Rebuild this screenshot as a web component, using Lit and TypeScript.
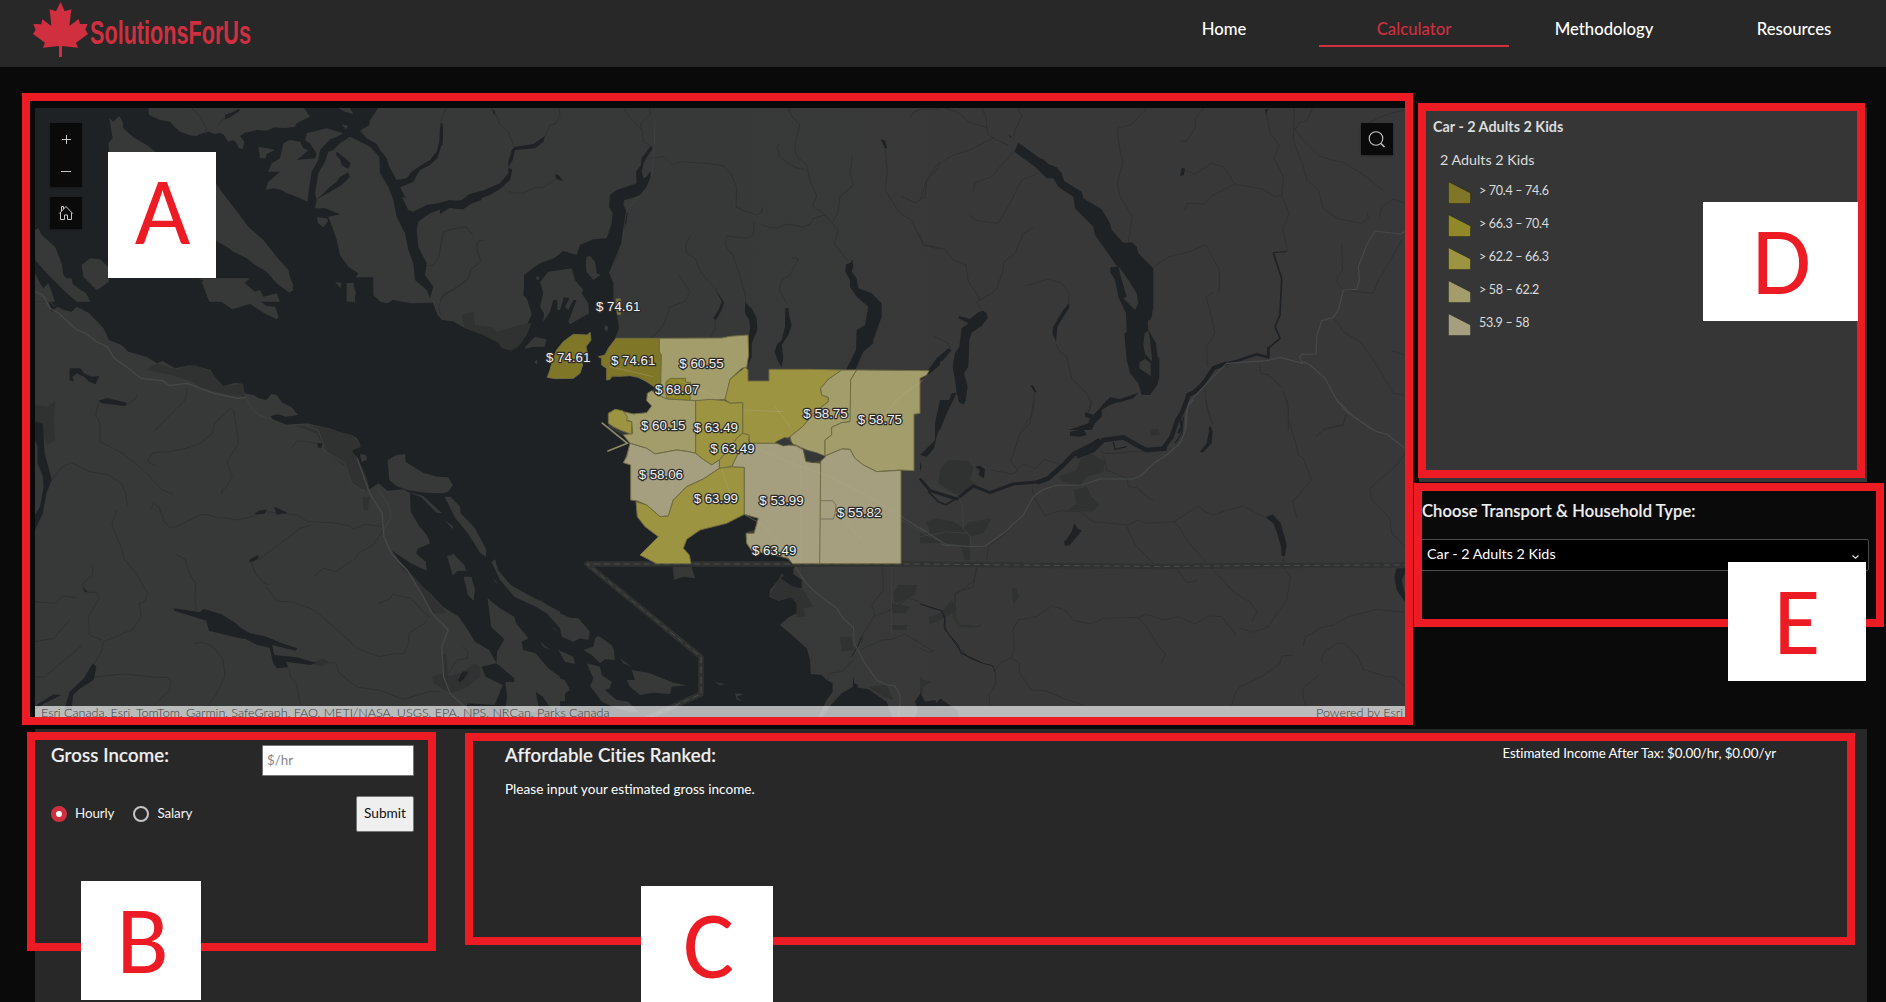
import { LitElement, html, svg, css } from "lit";
import { customElement } from "lit/decorators.js";

/* Each map sheet keeps its own coordinate space; the matrix places it on the canvas. */
interface Sheet {
  m: string;
  water?: string[];
  land?: string[];
  urban?: string[];
  lakes?: string[];
  rivers?: string[];
  channels?: [string, number][];
  roads?: string[];
  lanes?: string[];
}

const T = (x: number, y: number, sx = 1 / 3, sy = 1 / 3) => `matrix(${sx},0,0,${sy},${x},${y})`;

const SHEETS: Sheet[] = [
  {
    m: T(0, 0),
    water: [
      "105,324 445,324 447,345 480,360 510,365 525,382 540,395 575,407 590,408 600,402 625,395 645,402 660,398 672,405 685,425 700,420 712,432 715,444 728,447 733,425 720,408 735,398 770,390 800,392 825,382 850,385 885,380 890,370 930,350 912,324 1135,324 1110,360 1108,375 1080,392 1100,415 1130,432 1140,450 1160,475 1168,500 1190,540 1220,535 1235,515 1265,495 1290,480 1310,455 1318,425 1320,375 1328,375 1329,410 1320,450 1312,475 1290,495 1260,510 1240,545 1200,562 1217,595 1205,590 1225,630 1240,635 1280,615 1340,605 1385,600 1410,582 1445,572 1445,600 1400,615 1380,628 1340,622 1290,640 1255,665 1250,690 1255,740 1280,790 1275,825 1300,860 1290,895 1280,870 1245,840 1240,790 1225,750 1215,700 1190,650 1180,600 1165,560 1140,520 1138,470 1110,440 1090,430 1050,410 1020,430 1000,450 985,455 975,485 955,520 945,580 950,600 945,625 975,625 1020,643 985,650 1000,690 1010,720 1020,765 1045,800 1075,820 1065,835 1115,845 1120,905 105,905",
    ],
    land: [
      "850,430 870,420 900,425 910,445 925,450 912,462 890,480 945,475 950,462 930,430 916,422 920,400 980,385 1030,400 1008,412 990,418 960,450 955,480 935,515 928,560 922,605 890,590 878,585 860,580 845,570 820,565 797,570 805,545 840,515 805,515 815,490 840,475",
      "775,440 800,445 825,450 800,462 797,475 780,475",
      "950,652 980,655 985,662 970,682 955,670",
      "1040,850 1060,855 1068,880 1062,905 1040,905",
      "1005,845 1025,850 1022,865",
      "1015,324 1050,324 1060,343 1035,335",
      "1025,373 1045,378 1037,388",
      "328,355 340,365 350,355 358,348 368,365 370,385 400,412 440,435 470,458 648,550 665,575 700,620 745,680 790,720 830,770 865,810 880,870 868,878 830,850 800,815 765,795 740,775 700,755 680,740 648,722 324,500 330,480 325,430 338,415",
      "245,795 270,775 300,778 324,800 324,845 290,870 250,830",
      "105,690 115,685 125,705 165,740 185,790 190,825 215,850 250,875 272,905 230,905 190,870 150,830 105,780",
      "105,820 120,850 130,865 145,850 155,875 165,905 105,905",
      "605,845 620,838 650,838 700,850 735,850 765,875 780,870 790,890 830,880 840,905 628,905 618,880",
    ],
    lakes: [
      "675,345 700,335 720,325 715,335 690,352 675,358",
      "1010,455 1030,470 1052,490 1045,507 1025,495 1020,478 1008,465",
      "953,597 985,565 1010,545 1020,530 1045,517 1050,530 1025,555 985,578",
    ],
    rivers: ["575,324 600,348 618,385 618,402", "1340,324 1325,350 1322,380", "1282,798 1300,795 1315,775 1330,700 1345,688 1400,682 1418,705", "1440,720 1430,735 1433,760 1440,775", "1440,790 1410,810 1405,840 1325,890", "652,380 668,358 720,330"],
    lanes: ["105,880 140,895 165,920"],
  },
  {
    m: T(0, 280, 1 / 2.8),
    water: [
      "98,-8 1045,-8 1045,45 1065,65 1085,70 1100,60 1150,70 1212,68 1225,105 1238,120 1270,125 1300,145 1335,162 1370,178 1400,190 1410,205 1425,212 1450,205 1465,160 1490,100 1478,60 1465,45 1470,-8 1568,-8 1568,1325 1290,1325 1310,1270 1385,1275 1408,1215 1360,1190 1348,1160 1390,1150 1370,1110 1330,1085 1310,1050 1285,1010 1240,980 1205,940 1165,905 1130,860 1098,812 1150,850 1195,872 1192,845 1165,820 1170,806 1205,790 1195,765 1175,740 1150,695 1148,640 1130,628 1085,632 1060,610 1035,628 1025,590 1000,530 983,520 990,508 1010,498 1000,475 985,465 960,460 920,444 880,435 860,430 800,435 765,420 757,408 780,403 800,410 835,405 815,380 790,368 775,345 760,342 745,360 725,355 710,345 685,340 680,312 660,308 625,318 605,300 590,270 560,262 530,256 490,265 455,243 440,250 410,230 360,215 340,195 305,180 290,145 250,100 215,80 200,95 180,90 160,80 145,95 135,60 120,40 98,25",
    ],
    land: [
      "555,-5 575,5 590,55 620,65 650,88 700,72 740,100 775,118 780,110 770,80 745,78 720,55 690,25 685,10 700,-5",
      "150,-5 205,30 215,45 250,58 240,38 205,20 200,-5",
      "240,-5 272,30 305,5 305,-5",
      "770,-5 795,10 810,35 822,15 812,-5",
      "970,10 990,8 995,68 978,60",
      "1365,955 1400,985 1440,1010 1445,1030 1480,1075 1460,1085 1465,1110 1500,1120 1535,1165 1568,1190 1568,1325 1520,1250 1500,1235 1510,1290 1410,1325 1420,1250 1415,1205 1440,1207 1440,1195 1390,1150 1392,1115 1412,1078 1375,1040",
      "1085,540 1110,525 1135,522 1135,545 1185,578 1225,590 1255,592 1268,615 1255,635 1240,640 1190,638 1140,630 1110,618 1090,600",
      "1245,650 1262,650 1288,680 1290,700 1330,745 1362,810 1360,830 1345,820 1310,760 1275,715",
      "1376,845 1386,838 1395,870 1430,915 1480,945 1568,995 1568,1022 1500,980 1440,950 1400,900",
      "1252,828 1270,822 1300,855 1305,872 1280,873 1268,888",
      "1298,890 1320,890 1330,930 1326,962 1310,945",
      "1140,635 1185,648 1238,700 1222,698 1180,652",
      "1008,522 1025,525 1028,540 1012,545",
      "1245,720 1270,740 1268,748",
      "1380,895 1398,915 1385,905",
      "1490,180 1530,180 1525,200 1490,200 1470,208",
    ],
    urban: [
      "410,270 440,250 490,268 545,255 590,275 625,318 680,312 685,350 640,345 570,325 525,300 480,285",
      "98,372 130,380 155,365 150,420 155,480 130,495 118,440 98,440",
      "820,435 900,440 985,465 1010,500 985,512 1000,535 1025,590 1035,632 1000,625 980,600 965,560 920,520 900,490 885,460",
      "1210,1190 1240,1180 1235,1120 1250,1125 1255,1190 1290,1180 1330,1150 1345,1165 1345,1190 1310,1220 1260,1240 1215,1210",
      "1110,850 1150,880 1240,985 1250,1000 1210,1000 1160,900",
      "1015,650 1035,650 1030,690 1018,690",
      "870,1150 905,1135 920,1145 900,1160",
    ],
    lakes: [
      "195,265 225,265 235,280 255,290 278,288 268,313 250,305 235,290 215,280 203,290 207,305 195,300",
      "275,362 300,354 355,368 350,378 285,370",
      "98,425 120,430 125,520 145,600 130,640 120,700 98,750 98,705 112,680 122,620 120,590 105,550 105,500 98,480",
      "485,985 520,990 560,997 570,986 620,1003 660,1030 670,1040 700,1060 740,1068 790,1090 832,1105 828,1112 762,1095 768,1125 830,1132 885,1148 870,1155 800,1145 808,1162 775,1165 765,1150 755,1103 720,1095 690,1078 660,1072 585,1052 578,1022 490,993",
      "260,1150 270,1160 262,1200 225,1225 205,1245 200,1290 180,1290 195,1235 235,1195",
      "98,1278 150,1243 172,1245 125,1270 98,1290",
      "712,702 725,692 748,688 740,702",
      "768,680 805,698 775,704",
      "697,840 722,825 725,835 702,848",
      "888,490 903,490 900,504 890,502",
      "1282,1200 1295,1175 1312,1175 1300,1195 1288,1208",
      "230,920 245,935 238,937",
    ],
    rivers: [
      "275,372 268,405 280,430 280,485 345,520 400,570 455,630 485,643",
      "385,340 380,355 355,375", "525,325 518,360 485,395 430,455",
      "435,557 412,543 430,517 475,515 520,505 560,490 595,460 600,430 645,385 655,395 668,490 650,520 635,545 650,590 635,620 622,630 622,643",
      "145,600 160,580 175,560 200,548 250,575 300,583 340,610 352,640 357,675",
      "423,685 430,670 445,680 460,725 475,742 495,740 560,705 580,703 605,713 640,715 665,720 710,708 745,695 835,705 860,725 930,728 980,738 990,748 1020,733 1070,740",
      "327,690 313,735 335,790 350,840 385,885 395,905 413,940 405,965 390,970 395,1010 370,1050 345,1060 290,1085 285,1110 265,1150",
      "870,735 840,745 785,790 725,838", "705,850 715,880 735,905 752,915", "745,920 775,963 825,967 880,990 960,1065 1000,1105 1060,1130 1110,1120 1130,1122 1145,1085 1145,1060 1195,1025",
      "1070,755 1045,795 1003,820 995,835 940,875 905,865 878,890", "493,823 518,838 530,880 548,910 545,950 550,990",
      "818,502 832,482 888,490", "260,860 258,885 230,912 245,937 270,937 278,955 248,1010 250,1065 285,1080",
      "98,965 155,970 175,948 212,953", "98,1085 150,1075 195,1020", "98,1192 125,1190 228,1097", "255,1192 345,1182 440,1192 470,1192 480,1205 475,1230 428,1280",
      "542,1090 570,1087 597,1100 625,1140 630,1190 605,1245 580,1280", "810,1165 812,1190 830,1210 838,1260 845,1280",
      "885,1150 940,1148 950,1180 1000,1222 1060,1230 1130,1258 1200,1235 1230,1235", "1060,970 1090,958 1100,943 1150,955 1190,1000 1205,1012", "1297,1100 1310,1115 1308,1135 1280,1140 1255,1180",
      "1305,0 1240,50 1228,80 1235,105",
    ],
    roads: [
      "98,35 120,45 140,85 165,100 215,150 240,160 270,185 300,200 320,235 360,265 395,295 455,302 475,317 525,310 560,325 600,340 665,355 690,352",
      "1000,535 1015,580 1035,640 1070,700 1075,770 1095,820 1140,870 1180,940 1210,1000 1255,1050 1237,1100 1242,1190 1260,1240 1310,1290",
    ],
    lanes: ["690,355 705,385 725,405 765,420 800,435 850,435 890,450 905,490 905,510 965,550 985,610 1020,635", "1060,630 1090,680 1095,710 1075,750"],
  },
  {
    m: T(440, 80),
    water: [
      "240,795 265,760 285,740 275,700 262,660 275,640 252,615 252,585 285,560 300,550 345,533 370,513 410,525 420,495 460,478 500,475 515,430 518,400 507,380 510,345 530,330 590,310 588,275 603,255 605,235 632,198 638,205 612,245 605,275 610,295 620,290 632,272 632,290 620,320 600,345 575,355 553,360 550,375 563,400 560,425 550,455 545,490 535,520 508,580 520,610 520,660 530,700 537,745 525,775 490,830 500,900 0,900 0,720 40,725 75,745 130,765 175,788 185,805 215,812",
      "0,368 30,360 65,365 85,345 120,335 180,310 205,280 205,245 215,210 225,200 280,192 315,168 310,185 285,205 225,210 218,240 205,262 217,270 210,300 190,318 175,330 150,345 110,360 70,388 30,383 0,402",
      "0,130 8,130 8,195 0,200",
      "1440,900 1470,865 1500,832 1500,855 1470,880",
    ],
    land: [
      "300,605 325,575 395,565 405,600 430,630 425,640 445,670 447,700 390,733 385,725 410,660 400,660 385,690 375,680 388,655 372,652 360,690 352,690 352,660 340,660 330,695 310,725 312,700 300,680 310,640",
      "440,530 450,528 465,545 470,580 482,585 460,600 440,575 437,555",
      "495,735 505,742 500,755 493,748",
      "286,590 300,590 293,602",
      "252,805 285,770 318,778 312,795 285,800",
      "283,845 293,838 290,855",
    ],
    urban: ["65,705 100,695 105,735 160,742 170,755 240,735 275,730 260,765 240,795 215,812 185,805 175,788 130,765 75,745"],
    lakes: [
      "915,668 935,685 950,715 952,750 935,790 935,830 920,862 910,855 925,790 930,745 928,720 915,700",
      "1036,685 1045,683 1048,710 1055,735 1045,765 1025,795 1030,830 1025,862 1012,840 1004,815 1010,795 1025,780 1035,740",
      "1238,538 1240,560 1235,575 1250,595 1255,625 1295,640 1325,670 1325,710 1300,780 1300,790 1270,815 1245,872 1218,870 1248,810 1250,750 1275,735 1285,680 1250,650 1230,620 1230,600 1216,575 1218,552 1230,550",
      "825,628 838,645 852,668 845,690 828,720 820,715 835,690 846,665",
      "153,85 165,95 163,105", "345,282 355,285 370,302 350,298", "1322,178 1335,182 1342,205 1335,205",
    ],
    rivers: [
      "160,85 180,135 205,155 218,190 222,200", "358,85 360,110 345,132 330,135 315,170", "190,318 205,335 250,340 285,322 310,322 350,295",
      "0,505 10,455 60,442 80,442 97,460", "133,480 112,485 112,510 122,540 92,570 88,590 50,625 15,640 0,660", "555,85 558,100 585,128 608,155 610,185 632,197", "628,85 632,103 602,130 605,150",
      "632,235 672,230 697,255 725,245 800,250 850,257 872,280 890,320 888,380 910,392 950,405 965,395 968,382", "962,433 985,442 1010,444 1045,432 1090,442 1110,432 1120,415 1155,405",
      "1018,190 1012,205 1020,232 1065,262 1098,270", "1045,85 1055,108 1080,135 1070,170 1063,210 1072,230 1100,255 1110,300 1130,350 1117,378 1155,405 1195,450 1182,490 1225,545",
      "1238,230 1230,280 1240,315 1200,350 1195,395 1178,425", "1335,200 1342,270 1335,330 1380,400 1415,420 1450,495 1500,508", "1500,255 1460,305 1455,350 1425,368 1385,350",
      "752,465 737,495 740,520 765,535 785,580 830,630", "943,427 940,465 920,475 860,468 855,495 880,530 900,590 915,640 918,670",
      "1055,532 1075,537 1050,585 1025,600 1017,630 1040,670", "717,587 750,635 735,665 690,680 675,725 660,750 632,775", "825,720 825,745 810,775", "1412,110 1420,98 1440,88 1500,88",
    ],
    lanes: ["645,120 642,230 635,290", "600,345 560,390 545,490 508,580"],
  },
  {
    m: T(530, 280),
    water: [
      "-10,200 230,262 230,300 265,287 300,287 350,303 375,320 355,345 365,375 350,400 300,400 255,388 235,400 235,440 285,470 300,490 280,545 302,555 302,660 318,665 320,710 385,770 330,825 380,852 483,852 480,830 460,805 470,775 520,745 590,730 640,703 683,710 675,750 650,755 650,790 665,810 750,825 790,850 790,900 -10,900",
    ],
    roads: ["1112,708 1180,752 1240,795 1260,796"],
  },
  {
    m: T(920, 80),
    lakes: [
      "295,188 360,235 370,238 385,252 410,262 425,280 432,303 485,335 490,355 545,388 570,430 575,450 610,488 635,487 650,500 655,520 700,565 700,680 693,718 683,722 685,750 708,790 712,830 718,835 718,890 712,915 690,945 665,945 655,910 630,880 620,840 613,760 620,755 618,700 595,650 585,600 570,575 572,562 592,560 525,465 520,440 465,385 460,350 415,320 400,295 380,295 345,260 283,215",
      "200,700 203,715 185,737 155,758 148,780 145,860 132,880 143,920 137,960 130,972 118,968 110,940 105,900 98,860 105,820 118,800 125,745 145,730 115,715 118,708 150,717 175,697 190,692",
      "95,810 70,840 25,870 50,835 85,805",
      "448,668 447,685 430,710 412,740 408,785 397,760 400,740 415,715 430,690",
      "95,940 110,938 95,970 78,1005 60,1050 45,1050 50,1020 72,990 85,965",
      "655,938 640,955 600,967 570,965 545,985 545,1010 525,1030 515,1050 445,1050 505,1030 510,1015 495,1008 497,997 520,1005 540,985 570,952 600,957",
      "265,163 278,175 270,172", "785,265 795,265 792,285 780,288", "330,915 340,918 350,935 345,938", "870,1038 877,1050 865,1050",
      "1035,90 1045,85 1038,105",
    ],
    land: [],
    rivers: [
      "75,85 110,95 150,128 200,142 205,165 230,180 265,195", "185,85 198,110 200,145", "295,85 305,110 285,150 282,178", "0,360 20,300 50,255 100,225 150,210 222,172", "280,215 215,290 165,308 160,332", "355,280 305,300 270,370 235,430 170,422 148,405",
      "680,85 635,133 592,145 598,200 608,250 592,310 600,350 637,410 625,485", "0,462 10,495 45,500 75,508 100,540 138,555 145,605 170,640 180,660", "340,442 310,460 285,520 252,545 248,575 230,625 215,640 170,665 185,690", "320,617 385,597 425,610 448,640 445,668", "408,790 415,810 440,830 455,895 500,940 515,970 505,1000",
      "850,85 828,115 825,145 800,183 780,183", "790,270 825,282 875,250 910,260 945,312 1030,328 1065,350 1085,345", "792,390 803,370 850,372 880,345 945,312", "703,560 745,530 810,515 857,493 898,570 898,635", "880,637 858,650 870,690 885,760 860,800 862,860", "855,925 860,980 875,1030",
      "1040,100 1050,160 1078,195 1062,235 1090,290 1085,345 1108,400 1088,445 1102,512", "1123,85 1120,180 1150,260 1160,300 1195,330 1210,385 1250,415 1325,430 1345,415 1342,400", "1123,145 1150,180 1200,230 1270,248 1325,280 1390,332", "1178,85 1160,122 1138,128 1125,150", "1455,90 1410,100 1345,128", "1455,370 1420,357 1385,380 1378,412", "1265,490 1268,570 1252,590 1252,610 1272,630 1360,640 1375,600 1400,560 1445,480", "1242,715 1270,755 1320,785 1370,855 1420,940 1455,945", "1020,850 1022,880 1045,885 1085,922", "1090,935 1105,985 1105,1050", "1278,1005 1270,1035 1210,1050", "42,768 85,790 90,805", "343,940 340,1000 310,1040", "1418,813 1455,825",
    ],
    channels: [["1060,518 1070,550 1085,595 1080,705 1065,740 1080,775 1045,805", 5], ["1045,800 1045,832 1010,823 950,843 920,850", 8], ["920,850 880,865 850,910 825,935 805,945 795,985", 13], ["795,980 778,1005 785,1040 775,1060", 7], ["1060,518 1100,515", 3]],
    roads: ["1455,455 1440,462 1365,453 1340,495 1315,560 1318,600 1310,628 1270,630 1255,690 1240,712 1205,722 1190,770 1188,822 1145,823 1138,832 1148,850 1080,832 1040,842 920,850 860,910 805,970 798,1000 795,1050", "1148,845 1170,855 1215,895 1250,960 1300,1010 1330,1030 1360,1050"],
  },
  {
    m: T(920, 400),
    urban: [
      "60,210 85,180 145,182 160,205 150,240 170,255 110,285 55,250", "18,365 50,355 100,365 130,385 150,365 215,355 190,400 150,410 150,480 135,480 120,435 60,430 0,430 0,400 30,395", "415,230 470,210 480,180 510,160 555,185 550,215 500,230 480,255 430,245", "460,270 500,260 515,290 540,315 515,335 445,330 470,310",
      "275,565 290,565 297,590 280,615", "25,650 60,640 95,600 110,630 80,650 30,675", "690,88 715,88 720,105 695,108", "0,830 15,840 35,845 10,860 10,880 0,880",
    ],
    lakes: [
      "450,95 490,88 500,105 480,110 450,108", "495,40 520,45 540,25 560,0 610,0 570,15 545,30 530,65 505,80 490,88 505,72 510,55 495,50",
      "870,78 878,95 875,130 848,158 840,155 860,130", "463,370 472,385 485,393 470,410 450,435 435,438 432,425 440,418 455,395", "1037,352 1058,343 1082,370 1092,405 1100,435 1095,468 1085,468 1083,440 1070,395 1060,370",
      "1430,505 1455,505 1455,520 1445,540 1455,580 1455,607 1430,570 1423,530", "165,200 180,197 195,208 192,235 175,225 180,212", "115,0 138,0 130,14", "0,185 5,200 0,215",
      "0,875 15,905 45,900 50,908 80,925 105,952 0,952", "60,0 95,0 75,40 60,80 50,110 42,145 20,170 0,165 45,120 45,70",
    ],
    channels: [["0,235 30,272 110,297 160,258 210,278 280,252 360,245", 9], ["25,275 55,305 78,314 120,288", 5], ["350,248 385,235 430,195 460,163 520,132 540,120", 14], ["470,170 520,150 550,120 610,112 650,135 680,150 740,145", 14], ["730,145 755,110 772,60 785,40 800,0", 13], ["580,125 585,148 620,140", 4], ["765,130 785,100 790,50", 4], ["0,612 60,630 75,650 72,680 95,715 115,745 150,775 190,790 218,797 225,815", 3]],
    rivers: [
      "340,0 330,70 300,100 272,185 295,212 275,222 215,210", "295,205 310,192 345,205 375,178 410,190 430,200", "335,260 345,295 375,347 420,332 480,335 520,365 625,375 655,360 680,370 762,365 835,318 855,335 880,345 925,330 970,318 1035,352", "515,0 505,35", "858,0 870,50 878,75", "1103,0 1105,60 1125,120 1135,165 1150,175 1175,240 1118,305 1130,350",
      "1278,42 1268,75 1215,85 1188,110", "1455,160 1430,195 1350,265 1355,300 1410,355 1415,400 1455,440", "620,378 645,435 700,490", "762,365 780,385 800,420 860,488 945,580 990,605 1010,632 997,665", "770,505 800,548 832,542", "1090,470 1092,505 1112,530 1100,600 1075,635 1045,680 1000,697 960,685",
      "545,150 555,185 560,210 620,235 625,260 650,262 680,290 700,300", "555,160 595,160 630,155 680,155", "170,500 160,560 105,580 100,650 115,680 175,680 185,670", "275,775 283,740 278,690 295,660 350,650 395,618 435,630 460,660 510,672 550,655 655,652 680,643 730,660 775,650 825,672 865,648 905,650 948,705",
      "655,652 680,680 712,735 737,762 725,788", "225,810 240,790 275,772 298,790 300,820 335,870 375,872 430,895 490,915", "225,815 228,850 207,885 210,918", "310,345 245,410 205,440 200,480", "935,918 945,880 960,860 1025,830 1080,790 1085,768 1120,765", "1150,738 1155,712 1205,682 1240,675 1285,650 1370,628 1455,637", "1197,825 1148,865 1150,895 1160,918", "1210,788 1203,780 1215,752 1258,728 1275,732 1312,768 1330,808 1400,830 1425,832 1455,862",
      "0,745 30,758 45,750",
    ],
    roads: ["820,0 803,20 797,90 780,130 740,165 700,190 665,225 640,237 540,237 485,255 410,256 370,268 340,290 310,345 250,400 195,438 150,440 80,435 0,383", "1250,0 1280,35 1330,70 1370,95 1400,102 1455,145"],
    lanes: ["0,230 30,255 115,290 128,320 130,385 150,410 152,440", "0,410 60,400 75,395 140,400"],
  },
  {
    m: T(540, 520),
    water: [
      "0,130 755,130 768,142 725,160 715,180 690,210 688,230 715,243 752,232 770,250 770,280 745,292 720,315 755,345 800,385 810,420 812,462 845,465 860,480 878,490 878,515 860,540 830,600 0,600",
      "840,600 870,558 905,520 940,500 985,508 1040,545 1060,600", "1120,600 1135,570 1125,545 1140,522 1150,545 1190,550 1200,535 1250,570 1260,600",
    ],
    land: [
      "398,140 455,140 465,175 430,170 402,180", "0,240 50,275 90,293 115,295 150,335 145,360 120,355 100,365 65,350 60,325 20,280 0,268",
      "165,355 175,347 215,375 222,390 225,420 195,418 180,430 155,405 130,390 160,380", "55,390 100,410 105,432 75,425", "0,435 15,440 25,465 75,480 90,510 75,520 75,543 40,545 0,515",
      "140,430 180,440 185,465 215,485 210,505 195,510 230,540 265,545 295,575 265,575 220,560 185,545 160,510 150,500 160,475", "260,480 285,480 275,450 330,460 400,488 440,496 395,500 390,522 340,518 300,525 270,500",
      "240,415 275,440 250,430", "30,315 55,335 45,330", "0,365 30,390 10,380", "525,487 555,492 540,496", "585,520 610,522 590,530 607,545 590,538",
    ],
    urban: ["690,225 725,160 760,190 790,210 820,260 790,265 797,290 770,290 770,250 752,232 715,243", "1075,195 1130,195 1125,225 1090,240 1065,250 1060,220", "900,350 935,350 940,390 905,395", "985,500 1040,495 1060,540 1030,530", "1055,250 1110,260 1095,280 1058,280", "1055,315 1100,315 1100,330 1058,330"],
    lakes: ["722,175 750,155 785,180 785,205 755,198", "1140,250 1180,265 1205,272 1180,268", "940,470 943,490 955,495 945,515 938,500"],
    channels: [["1205,270 1215,300 1215,330 1255,375 1262,400 1320,425", 3], ["965,350 955,375 935,410", 3]],
    rivers: ["1028,142 1030,210 995,255 1005,285 970,340 965,370", "960,390 1025,360 1055,358 1095,343 1125,360 1180,395", "940,420 905,455 870,460 862,480", "1000,290 1050,270 1105,235 1140,245", "1312,145 1300,185 1245,225 1245,290 1260,315 1320,320"],
    roads: ["765,140 800,190 830,220 890,265 910,295 940,322 943,370 975,430 1010,480 1040,495 1065,498 1080,525 1080,560 1072,600"],
    lanes: ["1055,142 1055,350", "782,142 782,155", "1085,0 1150,40 1215,72 1290,80"],
  },
];

const LAKE_ISLANDS = [
  "595,558 625,600 650,640 655,670 645,690 610,655 620,650 605,600",
  "685,752 690,780 697,845 675,822 670,795 674,760",
  "658,848 675,836 692,850 692,888 680,880 658,865",
];

/* Band colours, dearest first. */
const BANDS = ["#7f7727", "#918829", "#9c9440", "#a39d6c", "#a59f80"];

const REGIONS: [string, number][] = [
  ["258,57 272,57 272,70 266,75 272,90 272,103 262,103", 0],
  ["180,157 183,180 168,200 172,218 152,240 158,255 150,280 130,295 75,296 52,292 60,270 68,240 80,210 100,185 130,163 172,165", 0],
  ["258,175 388,175 388,215 394,225 392,322 375,322 350,305 325,292 300,287 265,289 245,288 240,298 230,300 230,265 215,255 215,235 205,230 225,225 235,205", 0],
  ["388,175 575,174 600,169 654,165 656,225 650,262 635,265 600,298 593,335 585,358 540,362 500,362 410,357 385,345 392,320 394,225 388,215", 3],
  ["422,295 467,295 467,307 482,307 480,362 412,357 408,345 408,305", 1],
  ["645,262 654,270 654,303 717,303 717,268 845,268 935,270 895,298 872,325 875,345 895,352 895,365 850,400 820,438 780,470 735,490 660,490 655,465 638,460 638,368 600,370 585,358 600,298", 2],
  ["935,270 980,270 962,300 962,425 935,428 905,442 905,465 885,480 885,528 835,512 785,490 780,470 820,438 850,400 895,365 895,352 875,345 872,325 895,298", 3],
  ["980,270 1197,272 1190,285 1170,295 1170,400 1152,403 1152,572 1110,570 1040,575 1000,555 975,535 960,508 935,507 885,528 885,480 905,465 905,442 935,428 960,425 962,300", 3],
  ["352,340 365,332 385,345 410,357 497,362 497,520 470,514 440,510 375,522 350,505 325,497 300,490 280,465 308,460 305,425 290,420 280,395 310,402 350,398 365,378 350,362", 3],
  ["235,400 255,388 278,392 292,410 290,422 305,425 305,463 270,450 250,440 235,430", 2],
  ["497,362 540,358 585,362 600,370 638,368 638,460 620,475 600,505 568,540 545,555 515,535 497,520", 2],
  ["638,460 658,465 655,490 625,520 605,560 568,565 568,540 600,505 620,475", 2],
  ["300,490 350,505 375,522 440,510 470,514 497,520 515,535 545,555 568,540 568,565 520,597 470,620 430,660 415,708 390,710 350,675 320,662 302,660 302,555 280,548 290,530", 4],
  ["318,665 350,675 390,710 415,708 430,660 470,620 520,597 568,565 605,560 643,562 643,703 590,730 510,750 470,778 460,805 478,825 483,851 380,851 330,825 345,810 385,770 345,740 322,710", 2],
  ["660,490 735,490 800,498 820,510 828,545 872,550 872,851 788,851 775,835 745,828 665,812 650,790 648,760 672,760 685,715 643,703 643,562 605,560 625,520", 4],
  ["885,528 935,507 960,508 975,535 1000,555 1040,575 1113,571 1113,851 869,851 872,545", 4],
];

const REGION_LINES = ["872,662 908,662 918,675 915,700 910,717 872,717"];
const REGION_STREETS = ["660,495 760,540 900,590 1000,640 1112,708", "645,705 700,735 790,850", "812,500 812,850", "575,565 600,640", "950,720 975,760 1000,780", "420,560 430,640", "445,300 560,350", "735,380 780,440", "1060,410 1110,350 1180,300", "640,390 760,395", "240,260 370,290"];
const HOLES = ["735,487 765,472 778,478 789,493 760,498", "820,508 860,518 887,530 868,545 850,548 828,543"];

const LABELS: [number, number, string][] = [
  [200, 95, "$ 74.61"], [50, 247, "$ 74.61"], [245, 257, "$ 74.61"], [450, 267, "$ 60.55"], [377, 345, "$ 68.07"],
  [335, 451, "$ 60.15"], [493, 457, "$ 63.49"], [543, 522, "$ 63.49"], [328, 598, "$ 58.06"], [493, 671, "$ 63.99"],
  [690, 676, "$ 53.99"], [923, 713, "$ 55.82"], [668, 828, "$ 63.49"], [822, 416, "$ 58.75"], [985, 435, "$ 58.75"],
];

const polys = (list: string[] | undefined, cls: string) => (list ?? []).map((p) => svg`<polygon class=${cls} points=${p}></polygon>`);
const lines = (list: string[] | undefined, cls: string) => (list ?? []).map((p) => svg`<polyline class=${cls} points=${p}></polyline>`);

@customElement("price-map")
class PriceMap extends LitElement {
  static styles = css`
    :host { display: block; position: relative; height: 614px; background: #373938; overflow: hidden; font-family: Lato, "Open Sans", sans-serif; }
    .canvas { display: block; width: 1373px; height: 614px; }
    .water, .lake { fill: #1e2225; }
    .land { fill: #373938; }
    .urban { fill: #303231; }
    .river { fill: none; stroke: #2d302f; stroke-width: 2.8; stroke-linejoin: round; }
    .channel { fill: none; stroke: #1e2225; stroke-linejoin: round; }
    .road { fill: none; stroke: #474848; stroke-width: 3.6; stroke-linejoin: round; }
    .lane { fill: none; stroke: #414343; stroke-width: 2.2; stroke-linejoin: round; }
    .border { fill: none; stroke: #303231; stroke-width: 5.4; stroke-linejoin: round; stroke-linecap: round; }
    .dash { fill: none; stroke: #4a4b4b; stroke-width: 1; stroke-dasharray: 6 4; }
    .region { stroke: #6f6b42; stroke-width: 3; stroke-linejoin: round; }
    .region-line { fill: none; stroke: #77735a; stroke-width: 3; }
    .street { fill: none; stroke: #b2ad92; stroke-opacity: .35; stroke-width: 3; }
    .hole { fill: #353737; stroke: #5f5c48; stroke-width: 2; }
    .label { font: 13.3px "Liberation Sans", Arial, sans-serif; fill: #f2f2f2; stroke: #2b2b2b; stroke-width: 2.6px; stroke-linejoin: round; paint-order: stroke; }
    .tools { position: absolute; left: 15px; top: 15px; display: flex; flex-direction: column; gap: 10px; }
    .find { position: absolute; left: 1326px; top: 15px; }
    .stack { display: flex; flex-direction: column; box-shadow: 0 1px 2px rgba(0,0,0,.3); }
    .tool { width: 32px; height: 32px; padding: 0; border: 0; background: #0a0a0a; display: grid; place-items: center; }
    .tool svg { display: block; width: 32px; height: 32px; fill: none; stroke: #c8c8c8; stroke-width: 1; }
    .credits { position: absolute; left: 0; right: 0; bottom: 0; height: 16px; padding: 0 5px 0 6px; display: flex; justify-content: space-between; background: rgba(255,255,255,.66); color: #3c3c3c; font-size: 12.6px; line-height: 14px; font-weight: 300; white-space: nowrap; }
    .credits .src { letter-spacing: -.04px; }
  `;

  render() {
    return html`
      <svg class="canvas" viewBox="35 108 1373 614">
        <defs><linearGradient id="relief" x1="0" x2="1" y1="0" y2="0"><stop offset="0" stop-color="#373938"></stop><stop offset=".45" stop-color="#373938"></stop><stop offset=".8" stop-color="#393838"></stop></linearGradient></defs>
        <rect x="35" y="108" width="1373" height="614" fill="url(#relief)"></rect>
        ${SHEETS.map((s) => svg`<g transform=${s.m}>${polys(s.water, "water")}</g>`)}
        ${SHEETS.map((s) => svg`<g transform=${s.m}>${polys(s.land, "land")}${polys(s.urban, "urban")}${lines(s.rivers, "river")}${polys(s.lakes, "lake")}${(s.channels ?? []).map(([p, w]) => svg`<polyline class="channel" points=${p} stroke-width=${w}></polyline>`)}${lines(s.lanes, "lane")}${lines(s.roads, "road")}</g>`)}
        <g transform=${T(920, 80)}>${polys(LAKE_ISLANDS, "land")}</g>
        <polyline class="border" points="647,718 701,694 701,657 587,564 920,564 1060,565.5 1160,566.5 1260,565.5 1408,565"></polyline>
        <polyline class="dash" points="647,718 701,694 701,657 587,564 920,564 1060,565.5 1160,566.5 1260,565.5 1408,565"></polyline>
        <g transform=${T(530, 280)}>
          <polyline points="215,428 292,490 232,514" fill="none" stroke="#8d8868" stroke-width="5"></polyline>
          ${REGIONS.map(([p, b]) => svg`<polygon class="region" points=${p} fill=${BANDS[b]}></polygon>`)}
          ${lines(REGION_STREETS, "street")}${lines(REGION_LINES, "region-line")}${polys(HOLES, "hole")}
        </g>
        ${LABELS.map(([x, y, t]) => svg`<text class="label" x=${529.3 + x / 3} y=${279.2 + y / 3}>${t}</text>`)}
      </svg>
      <div class="tools">
        <div class="stack">
          <button class="tool" aria-label="Zoom in"><svg><path d="M12 16.5h9M16.5 12v9"></path></svg></button>
          <button class="tool" aria-label="Zoom out"><svg><path d="M11 16.5h10"></path></svg></button>
        </div>
        <div class="stack"><button class="tool" aria-label="Home"><svg><path d="M9.3 16.5l6.7-7 6.7 7M10.5 15.5v7h4v-4.500h3v4.500h4v-7M11.500 14v-4.500h2v2.500"></path></svg></button></div>
      </div>
      <div class="find stack"><button class="tool" aria-label="Search"><svg><circle cx="15" cy="15.500" r="6.800" stroke-width="1.100"></circle><path d="M20 20.500l3.500 3.500" stroke-width="1.500"></path></svg></button></div>
      <div class="credits"><span class="src">Esri Canada, Esri, TomTom, Garmin, SafeGraph, FAO, METI/NASA, USGS, EPA, NPS, NRCan, Parks Canada</span><span>Powered by Esri</span></div>
    `;
  }
}

/* Callout frames and their letter cards float over the page. */
const FRAMES = [[22, 93, 1391, 632], [27, 732, 409, 219], [465, 733, 1390, 212], [1418, 103, 447, 375], [1414, 483, 470, 144]];
const CARDS: [string, number, number, number, number, number, number][] = [
  ["A", 108, 152, 108, 126, 54.5, 92], ["B", 81, 881, 120, 119, 61.5, 92], ["C", 641, 886, 132, 119, 67.5, 91.5], ["D", 1703, 202, 155, 119, 78.5, 92], ["E", 1728, 562, 138, 119, 69, 92],
];

@customElement("app-root")
class AppRoot extends LitElement {
  static styles = css`
    :host { display: block; position: relative; width: 1886px; height: 1002px; overflow: hidden; background: #0a0a0a; color: #f2f2f2; font-family: Lato, "Open Sans", sans-serif; }
    * { box-sizing: border-box; }
    .top { display: flex; height: 67px; background: #282828; overflow: hidden; }
    .brand { flex: none; width: 1129px; height: 67px; }
    .brand-name { font: bold 34px "Liberation Sans", Arial, sans-serif; fill: #d02f40; }
    .tabs { display: flex; }
    .tab { flex: none; width: 190px; height: 47px; padding-top: 19px; text-align: center; font-size: 16.7px; line-height: 20px; font-weight: 500; color: #fff; }
    .tab.on { color: #d02f40; border-bottom: 2px solid #d02f40; }
    .main { display: grid; grid-template-columns: 1373px 450px; column-gap: 11px; padding: 41px 0 0 35px; }
    .side { display: flex; flex-direction: column; }
    .legend { width: 448px; height: 374px; padding: 9px 14px; background: #363636; color: #dcdcdc; }
    .legend-title { font-size: 14.4px; line-height: 20px; font-weight: 700; }
    .legend-sub { margin: 14px 0 0 7px; font-size: 14.3px; line-height: 18px; }
    .band { display: flex; gap: 8px; height: 33px; padding-left: 15px; align-items: flex-start; font-size: 12.5px; letter-spacing: -.3px; line-height: 20px; }
    .bands { margin-top: 12px; }
    .band svg { width: 23px; height: 23px; display: block; }
    .chooser { padding-top: 17px; }
    .chooser-title { padding-left: 3px; font-size: 16.5px; letter-spacing: .12px; line-height: 24px; font-weight: 500; -webkit-text-stroke: .2px currentColor; }
    .select { margin-top: 16px; height: 32px; border: 1px solid #4a4a4a; border-radius: 2px; background: #000; display: flex; align-items: center; justify-content: space-between; padding: 0 8px 3px 7px; font-size: 14.3px; color: #fff; }
    .select svg { width: 9px; height: 6px; margin-top: 6px; }
    .panel { display: flex; margin: 7px 0 0 35px; width: 1832px; height: 273px; background: #282828; }
    .income { width: 470px; padding: 16px 91px 0 16px; }
    .row { display: flex; justify-content: space-between; align-items: flex-start; }
    .head { font-size: 18.6px; letter-spacing: .15px; line-height: 24px; font-weight: 500; margin-top: -2px; -webkit-text-stroke: .2px currentColor; }
    .amount { width: 152px; height: 31px; margin: 0; padding: 0 4px 2px; border: 1px solid #767676; border-radius: 1px; background: #fff; font: 13.3px Lato, sans-serif; }
    .amount::placeholder { color: #85858c; opacity: 1; }
    .row.pick { margin-top: 20px; }
    .radios { display: flex; gap: 19px; padding-top: 7px; }
    .radio { display: flex; gap: 8px; font-size: 13.4px; letter-spacing: -.1px; line-height: 20px; }
    .dot { width: 16px; height: 16px; margin-top: 3px; border-radius: 50%; border: 2px solid #c4c4c4; }
    .dot.on { border: 5px solid #d02f40; background: #fff; }
    .submit { width: 58px; height: 36px; padding: 0 0 4px; border: 1px solid #767676; border-radius: 2px; background: #efefef; color: #111; font: 13.7px Lato, sans-serif; }
    .ranked { width: 1271px; display: flex; justify-content: space-between; padding-top: 16px; }
    .note { margin: 12px 0 0; font-size: 13.6px; line-height: 20px; color: #fff; }
    .after { font-size: 13.3px; letter-spacing: -.05px; line-height: 16px; color: #fff; }
    .frame { position: absolute; border: 8px solid #ed1c24; pointer-events: none; }
    .card { position: absolute; background: #fff; }
    .card text { font: 96px Carlito, Lato, sans-serif; fill: #ed1c24; text-anchor: middle; }
  `;

  render() {
    const bands = ["> 70.4 – 74.6", "> 66.3 – 70.4", "> 62.2 – 66.3", "> 58 – 62.2", "53.9 – 58"];
    return html`
      <header class="top">
        <svg class="brand" viewBox="0 0 1129 67">
          <path transform="scale(.33333)" fill="#d02f40" d="M182 6L194 34 214 28 208 78 236 57 240 72 263 72 256 88 264 102 228 128 234 143 186 138 186 171 177 171 177 138 129 143 135 128 99 102 107 90 100 72 124 73 127 58 154 78 149 28 168 34Z"></path>
          <text class="brand-name" x="90" y="44" textLength="161" lengthAdjust="spacingAndGlyphs">SolutionsForUs</text>
        </svg>
        <nav class="tabs">${["Home", "Calculator", "Methodology", "Resources"].map((t) => html`<div class="tab ${t === "Calculator" ? "on" : ""}">${t}</div>`)}</nav>
      </header>
      <main class="main">
        <price-map></price-map>
        <aside class="side">
          <section class="legend">
            <div class="legend-title">Car - 2 Adults 2 Kids</div>
            <div class="legend-sub">2 Adults 2 Kids</div>
            <div class="bands">${bands.map((b, i) => html`<div class="band"><svg viewBox="0 0 23 23"><path d="M.5 .8L22.500 12V22.500H.5Z" fill=${BANDS[i]} stroke="#000" stroke-opacity=".28"></path></svg><span>${b}</span></div>`)}</div>
          </section>
          <section class="chooser">
            <div class="chooser-title">Choose Transport &amp; Household Type:</div>
            <div class="select"><span>Car - 2 Adults 2 Kids</span><svg viewBox="0 0 9 6"><path d="M1.500 1.500l3 2.700 3-2.700" fill="none" stroke="#ddd" stroke-width="1.300"></path></svg></div>
          </section>
        </aside>
      </main>
      <section class="panel">
        <div class="income">
          <div class="row"><div class="head">Gross Income:</div><input class="amount" placeholder="$/hr"></div>
          <div class="row pick">
            <div class="radios"><label class="radio"><span class="dot on"></span>Hourly</label><label class="radio"><span class="dot"></span>Salary</label></div>
            <button class="submit">Submit</button>
          </div>
        </div>
        <div class="ranked">
          <div><div class="head">Affordable Cities Ranked:</div><p class="note">Please input your estimated gross income.</p></div>
          <div class="after">Estimated Income After Tax: $0.00/hr, $0.00/yr</div>
        </div>
      </section>
      ${FRAMES.map(([x, y, w, h]) => html`<div class="frame" style="left:${x}px;top:${y}px;width:${w}px;height:${h}px"></div>`)}
      ${CARDS.map(([t, x, y, w, h, cx, by]) => html`<svg class="card" width=${w} height=${h} style="left:${x}px;top:${y}px"><text x=${cx} y=${by}>${t}</text></svg>`)}
    `;
  }
}
